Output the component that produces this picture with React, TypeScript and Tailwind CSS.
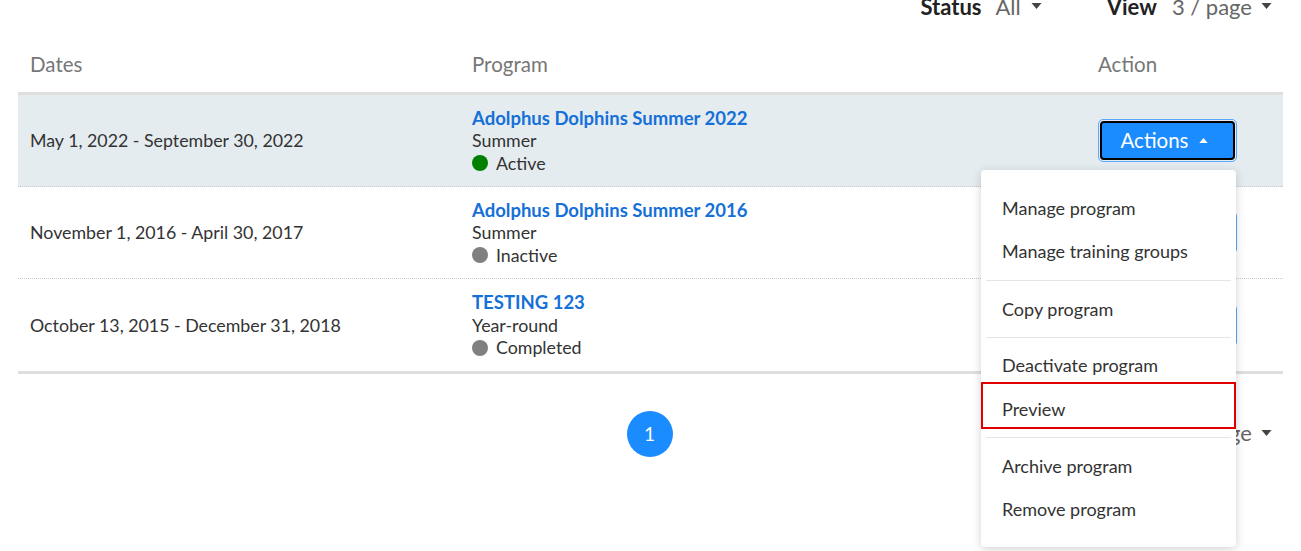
import React from "react"

type Row = {
  dates: string
  name: string
  season: string
  status: string
  dot: string
}

const ROWS: Row[] = [
  { dates: "May 1, 2022 - September 30, 2022", name: "Adolphus Dolphins Summer 2022", season: "Summer", status: "Active", dot: "bg-[#008000]" },
  { dates: "November 1, 2016 - April 30, 2017", name: "Adolphus Dolphins Summer 2016", season: "Summer", status: "Inactive", dot: "bg-[#808080]" },
  { dates: "October 13, 2015 - December 31, 2018", name: "TESTING 123", season: "Year-round", status: "Completed", dot: "bg-[#808080]" },
]

function Caret({ up = false, className = "" }: { up?: boolean; className?: string }) {
  return (
    <svg width="11" height="6" viewBox="0 0 10 6" className={className}>
      {up ? <path d="M0 6 L5 0 L10 6 Z" fill="currentColor" /> : <path d="M0 0 L5 6 L10 0 Z" fill="currentColor" />}
    </svg>
  )
}

function ActionsMenu() {
  const item = "flex items-center h-[43px] px-[21px] text-[18px] text-[#333]"
  return (
    <div className="absolute right-[1px] top-[51px] z-10 w-[255px] bg-white rounded-[4px] shadow-[0_2px_10px_rgba(0,0,0,0.18)] pt-[17px] pb-[16px]">
      <div className={item}>Manage program</div>
      <div className={item}>Manage training groups</div>
      <div className="mx-[5px] my-[7px] border-t border-[#e5e5e5]" />
      <div className={item}>Copy program</div>
      <div className="mx-[5px] my-[6px] border-t border-[#e5e5e5]" />
      <div className={item}>Deactivate program</div>
      <div className="-mt-[5px] border-2 border-[#e00000] h-[47px] pt-[7px] flex items-center px-[19px] text-[18px] text-[#333]">Preview</div>
      <div className="mx-[5px] mt-[8px] mb-[7px] border-t border-[#e5e5e5]" />
      <div className={item}>Archive program</div>
      <div className={item}>Remove program</div>
    </div>
  )
}

function ActionsButton({ open }: { open?: boolean }) {
  return (
    <div className="relative inline-block">
      <div className="rounded-[5px] border border-[#5aa8ff] p-[1px]">
        <button className="flex items-center justify-center gap-[11px] w-[135px] h-[39px] pr-[6px] rounded-[4px] bg-[#1a8cff] border-2 border-black text-white text-[20.5px]">
          Actions
          <Caret up className="w-[9px] h-[5px] text-white" />
        </button>
      </div>
      {open && <ActionsMenu />}
    </div>
  )
}

export default function App() {
  return (
    <div className="w-[1301px] h-[551px] overflow-hidden bg-white text-[#333]" style={{ fontFamily: "Lato, 'Open Sans', sans-serif" }}>
      <div className="flex justify-end items-center h-6 -mt-[6px] pr-[29px] text-[22px]">
        <span className="font-bold text-[#222]">Status</span>
        <span className="ml-[14px] text-[#666]">All</span>
        <Caret className="ml-[10px] text-[#444]" />
        <span className="ml-[65px] font-bold text-[#222]">View</span>
        <span className="ml-[15px] text-[#666]">3 / page</span>
        <Caret className="ml-[9px] text-[#444]" />
      </div>

      <div className="mx-[18px] mt-[22px]">
        <div className="grid grid-cols-[442px_626px_1fr] h-[55px] pb-[4px] items-center text-[20.5px] text-[#777] border-b-[3px] border-[#dedede]">
          <div className="pl-[12px]">Dates</div>
          <div className="pl-[12px]">Program</div>
          <div className="pl-[12px]">Action</div>
        </div>
        {ROWS.map((r, i) => (
          <div
            key={i}
            className={`grid grid-cols-[442px_626px_1fr] h-[92px] items-center ${i === 0 ? "bg-[#e5ecf0]" : ""} ${i < 2 ? "border-b border-dotted border-[#c8c8c8]" : ""}`}
          >
            <div className="pl-[12px] text-[17.8px]">{r.dates}</div>
            <div className="pl-[12px] flex flex-col leading-[22.5px] text-[17.8px]">
              <span className="font-bold text-[18.5px] text-[#1570d8]">{r.name}</span>
              <span>{r.season}</span>
              <span className="flex items-center gap-[8px]">
                <span className={`inline-block w-[16px] h-[16px] rounded-full ${r.dot}`} />
                {r.status}
              </span>
            </div>
            <div className="pl-[12px]">
              <ActionsButton open={i === 0} />
            </div>
          </div>
        ))}
        <div className="border-t-[3px] border-[#dedede]" />
      </div>

      <div className="relative mx-[18px] h-[120px]">
        <div className="flex justify-center pt-[37px] pr-[2px]">
          <div className="w-[46px] h-[46px] rounded-full bg-[#1a8cff] text-white text-[19px] flex items-center justify-center">1</div>
        </div>
        <div className="absolute right-[11px] top-[42px] flex items-center text-[22px] text-[#666]">
          <span>3 / page</span>
          <Caret className="ml-[9px] text-[#444]" />
        </div>
      </div>
    </div>
  )
}
